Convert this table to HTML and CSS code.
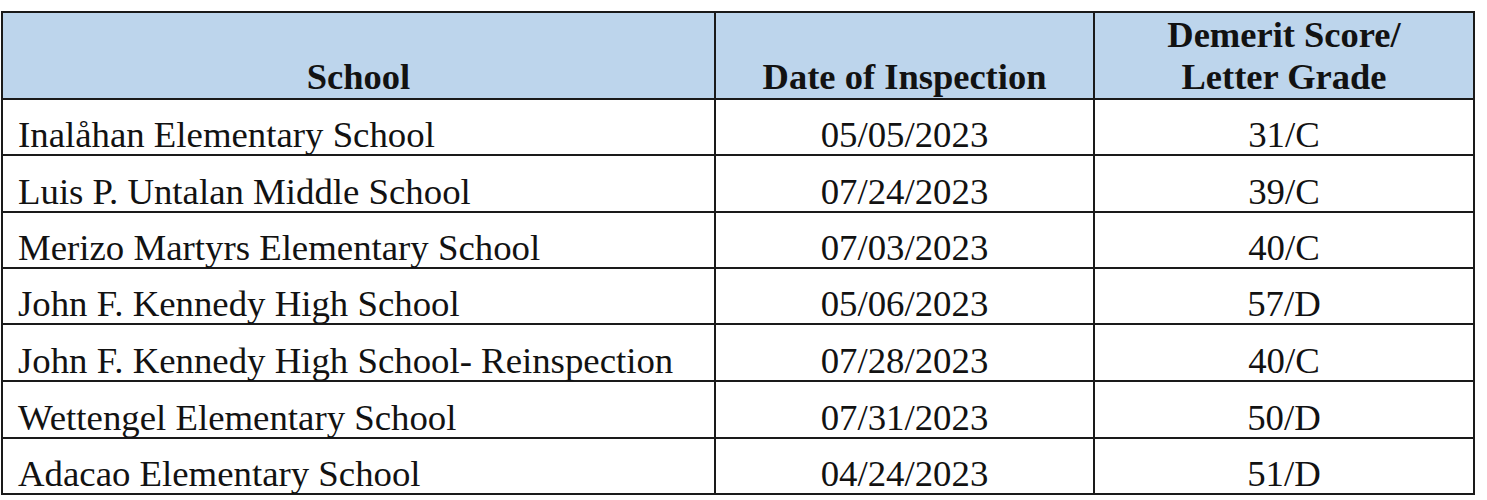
FILE: index.html
```html
<!DOCTYPE html>
<html lang="en">
<head>
<meta charset="utf-8">
<title>School Inspections</title>
<link rel="stylesheet" href="styles.css">
</head>
<body>
<table class="grades">
  <colgroup>
    <col class="c-school">
    <col class="c-date">
    <col class="c-score">
  </colgroup>
  <thead>
    <tr class="head-row">
      <th>School</th>
      <th>Date of Inspection</th>
      <th>Demerit Score/<br>Letter Grade</th>
    </tr>
  </thead>
  <tbody>
    <tr class="r56"><td class="name">Inalåhan Elementary School</td><td>05/05/2023</td><td>31/C</td></tr>
    <tr class="r57"><td class="name">Luis P. Untalan Middle School</td><td>07/24/2023</td><td>39/C</td></tr>
    <tr class="r56"><td class="name">Merizo Martyrs Elementary School</td><td>07/03/2023</td><td>40/C</td></tr>
    <tr class="r56"><td class="name">John F. Kennedy High School</td><td>05/06/2023</td><td>57/D</td></tr>
    <tr class="r57"><td class="name">John F. Kennedy High School- Reinspection</td><td>07/28/2023</td><td>40/C</td></tr>
    <tr class="r57"><td class="name">Wettengel Elementary School</td><td>07/31/2023</td><td>50/D</td></tr>
    <tr class="r56"><td class="name">Adacao Elementary School</td><td>04/24/2023</td><td>51/D</td></tr>
  </tbody>
</table>
</body>
</html>
```

FILE: styles.css
```css
html, body {
  margin: 0;
  padding: 0;
  background: #ffffff;
}

body {
  padding: 11px 0 0 1px;
  font-family: "Liberation Serif", "Times New Roman", serif;
  color: #121212;
}

.grades {
  border-collapse: collapse;
  table-layout: fixed;
  width: 1474px;
  border: 2px solid #1a1a1a;
}

.c-school { width: 713px; }
.c-date { width: 379px; }
.c-score { width: 380px; }

.grades th,
.grades td {
  border: 2px solid #1a1a1a;
  padding: 0;
  vertical-align: bottom;
  text-align: center;
}

.grades th {
  background: #bdd5ec;
  font-weight: bold;
  font-size: 36.5px;
  line-height: 42px;
  padding-bottom: 0;
}

.head-row { height: 87px; }
.r56 { height: 56px; }
.r57 { height: 57px; }

.grades td {
  font-size: 36.8px;
  line-height: 36px;
  padding-bottom: 1px;
  white-space: nowrap;
}

.grades td.name {
  text-align: left;
  padding-left: 15px;
}
```
